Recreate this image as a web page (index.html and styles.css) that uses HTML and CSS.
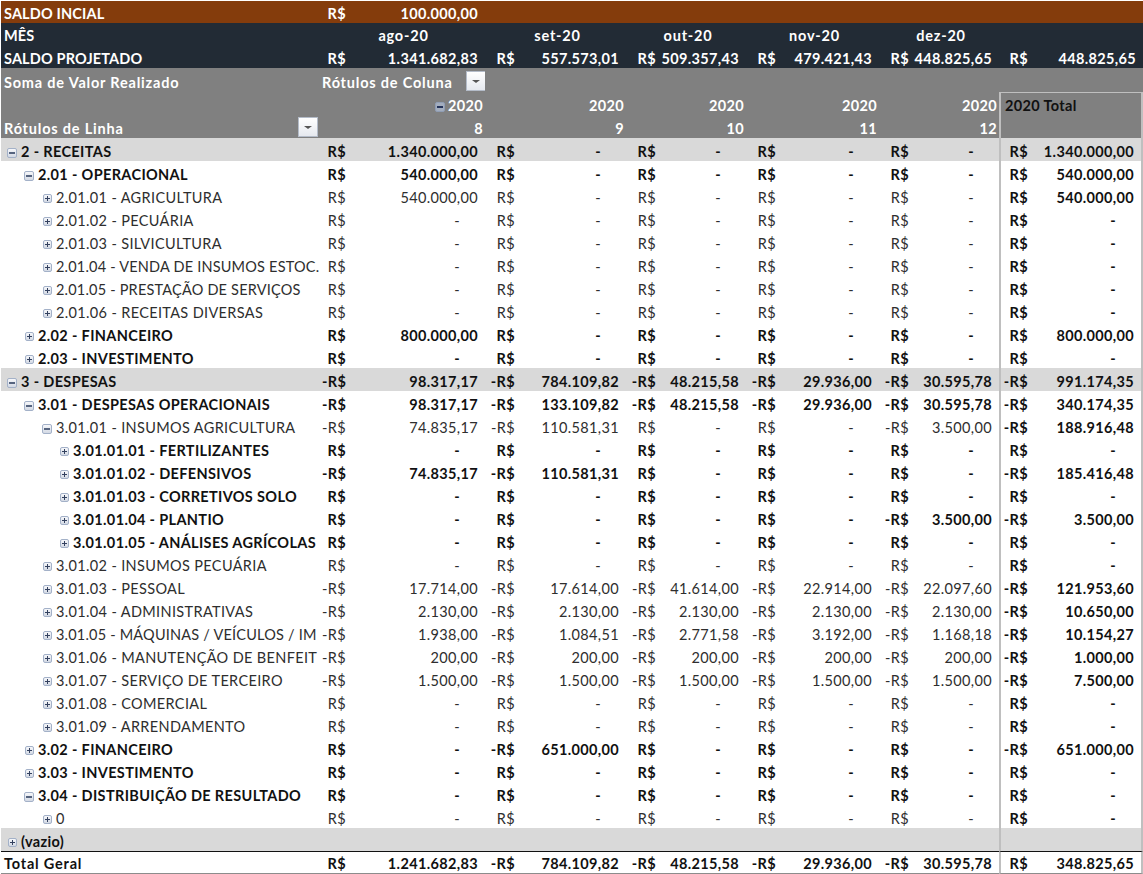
FILE: index.html
```html
<!DOCTYPE html>
<html lang="pt-BR">
<head>
<meta charset="utf-8">
<title>Tabela dinâmica</title>
<link rel="stylesheet" href="styles.css">
</head>
<body>
<table class="pivot">
<colgroup>
<col class="c-label"><col class="c1"><col class="v1"><col class="c2"><col class="v2"><col class="c3"><col class="v3"><col class="c4"><col class="v4"><col class="c5"><col class="v5"><col class="c6"><col class="v6">
</colgroup>
<tbody>
<tr class="brown"><td class="side">SALDO INCIAL</td><td class="cur">R$</td><td class="val">100.000,00</td><td colspan="10"></td></tr>
<tr class="navy month"><td class="side">MÊS</td><td colspan="2" class="mid first">ago-20</td><td colspan="2" class="mid">set-20</td><td colspan="2" class="mid">out-20</td><td colspan="2" class="mid">nov-20</td><td colspan="2" class="mid">dez-20</td><td colspan="2"></td></tr>
<tr class="navy proj"><td class="side">SALDO PROJETADO</td><td class="cur">R$</td><td class="val">1.341.682,83</td><td class="cur">R$</td><td class="val">557.573,01</td><td class="cur">R$</td><td class="val">509.357,43</td><td class="cur">R$</td><td class="val">479.421,43</td><td class="cur">R$</td><td class="val">448.825,65</td><td class="cur">R$</td><td class="val">448.825,65</td></tr>
<tr class="head h24"><td class="side wide">Soma de Valor Realizado</td><td colspan="2" class="collabel wide">Rótulos de Coluna<span class="drop drop-col"></span></td><td colspan="10"></td></tr>
<tr class="head"><td class="side"></td><td colspan="2" class="year"><span class="tog tog-dark"></span>2020</td><td colspan="2" class="year">2020</td><td colspan="2" class="year">2020</td><td colspan="2" class="year">2020</td><td colspan="2" class="year">2020</td><td colspan="2" class="grand top">2020 Total</td></tr>
<tr class="head"><td class="side rowlabel wide">Rótulos de Linha<span class="drop drop-row"></span></td><td colspan="2" class="year">8</td><td colspan="2" class="year">9</td><td colspan="2" class="year">10</td><td colspan="2" class="year">11</td><td colspan="2" class="year">12</td><td colspan="2" class="grand"></td></tr>
<tr class="band b"><td class="l0"><span class="tog"></span>2 - RECEITAS</td><td class="cur">R$</td><td class="val">1.340.000,00</td><td class="cur">R$</td><td class="val nil">-</td><td class="cur">R$</td><td class="val nil">-</td><td class="cur">R$</td><td class="val nil">-</td><td class="cur">R$</td><td class="val nil">-</td><td class="cur tc">R$</td><td class="val tv">1.340.000,00</td></tr>
<tr class="b"><td class="l1"><span class="tog"></span>2.01 - OPERACIONAL</td><td class="cur">R$</td><td class="val">540.000,00</td><td class="cur">R$</td><td class="val nil">-</td><td class="cur">R$</td><td class="val nil">-</td><td class="cur">R$</td><td class="val nil">-</td><td class="cur">R$</td><td class="val nil">-</td><td class="cur tc">R$</td><td class="val tv">540.000,00</td></tr>
<tr><td class="l2"><span class="tog plus"></span>2.01.01 - AGRICULTURA</td><td class="cur">R$</td><td class="val">540.000,00</td><td class="cur">R$</td><td class="val nil">-</td><td class="cur">R$</td><td class="val nil">-</td><td class="cur">R$</td><td class="val nil">-</td><td class="cur">R$</td><td class="val nil">-</td><td class="cur tc">R$</td><td class="val tv">540.000,00</td></tr>
<tr><td class="l2"><span class="tog plus"></span>2.01.02 - PECUÁRIA</td><td class="cur">R$</td><td class="val nil">-</td><td class="cur">R$</td><td class="val nil">-</td><td class="cur">R$</td><td class="val nil">-</td><td class="cur">R$</td><td class="val nil">-</td><td class="cur">R$</td><td class="val nil">-</td><td class="cur tc">R$</td><td class="val tv nil">-</td></tr>
<tr><td class="l2"><span class="tog plus"></span>2.01.03 - SILVICULTURA</td><td class="cur">R$</td><td class="val nil">-</td><td class="cur">R$</td><td class="val nil">-</td><td class="cur">R$</td><td class="val nil">-</td><td class="cur">R$</td><td class="val nil">-</td><td class="cur">R$</td><td class="val nil">-</td><td class="cur tc">R$</td><td class="val tv nil">-</td></tr>
<tr><td class="l2 tight"><span class="tog plus"></span>2.01.04 - VENDA DE INSUMOS ESTOC.</td><td class="cur">R$</td><td class="val nil">-</td><td class="cur">R$</td><td class="val nil">-</td><td class="cur">R$</td><td class="val nil">-</td><td class="cur">R$</td><td class="val nil">-</td><td class="cur">R$</td><td class="val nil">-</td><td class="cur tc">R$</td><td class="val tv nil">-</td></tr>
<tr><td class="l2 tight"><span class="tog plus"></span>2.01.05 - PRESTAÇÃO DE SERVIÇOS</td><td class="cur">R$</td><td class="val nil">-</td><td class="cur">R$</td><td class="val nil">-</td><td class="cur">R$</td><td class="val nil">-</td><td class="cur">R$</td><td class="val nil">-</td><td class="cur">R$</td><td class="val nil">-</td><td class="cur tc">R$</td><td class="val tv nil">-</td></tr>
<tr><td class="l2"><span class="tog plus"></span>2.01.06 - RECEITAS DIVERSAS</td><td class="cur">R$</td><td class="val nil">-</td><td class="cur">R$</td><td class="val nil">-</td><td class="cur">R$</td><td class="val nil">-</td><td class="cur">R$</td><td class="val nil">-</td><td class="cur">R$</td><td class="val nil">-</td><td class="cur tc">R$</td><td class="val tv nil">-</td></tr>
<tr class="b"><td class="l1"><span class="tog plus"></span>2.02 - FINANCEIRO</td><td class="cur">R$</td><td class="val">800.000,00</td><td class="cur">R$</td><td class="val nil">-</td><td class="cur">R$</td><td class="val nil">-</td><td class="cur">R$</td><td class="val nil">-</td><td class="cur">R$</td><td class="val nil">-</td><td class="cur tc">R$</td><td class="val tv">800.000,00</td></tr>
<tr class="b"><td class="l1"><span class="tog plus"></span>2.03 - INVESTIMENTO</td><td class="cur">R$</td><td class="val nil">-</td><td class="cur">R$</td><td class="val nil">-</td><td class="cur">R$</td><td class="val nil">-</td><td class="cur">R$</td><td class="val nil">-</td><td class="cur">R$</td><td class="val nil">-</td><td class="cur tc">R$</td><td class="val tv nil">-</td></tr>
<tr class="band b"><td class="l0"><span class="tog"></span>3 - DESPESAS</td><td class="cur">-R$</td><td class="val">98.317,17</td><td class="cur">-R$</td><td class="val">784.109,82</td><td class="cur">-R$</td><td class="val">48.215,58</td><td class="cur">-R$</td><td class="val">29.936,00</td><td class="cur">-R$</td><td class="val">30.595,78</td><td class="cur tc">-R$</td><td class="val tv">991.174,35</td></tr>
<tr class="b"><td class="l1"><span class="tog"></span>3.01 - DESPESAS OPERACIONAIS</td><td class="cur">-R$</td><td class="val">98.317,17</td><td class="cur">-R$</td><td class="val">133.109,82</td><td class="cur">-R$</td><td class="val">48.215,58</td><td class="cur">-R$</td><td class="val">29.936,00</td><td class="cur">-R$</td><td class="val">30.595,78</td><td class="cur tc">-R$</td><td class="val tv">340.174,35</td></tr>
<tr><td class="l2"><span class="tog"></span>3.01.01 - INSUMOS AGRICULTURA</td><td class="cur">-R$</td><td class="val">74.835,17</td><td class="cur">-R$</td><td class="val">110.581,31</td><td class="cur">R$</td><td class="val nil">-</td><td class="cur">R$</td><td class="val nil">-</td><td class="cur">-R$</td><td class="val">3.500,00</td><td class="cur tc">-R$</td><td class="val tv">188.916,48</td></tr>
<tr class="b"><td class="l3"><span class="tog plus"></span>3.01.01.01 - FERTILIZANTES</td><td class="cur">R$</td><td class="val nil">-</td><td class="cur">R$</td><td class="val nil">-</td><td class="cur">R$</td><td class="val nil">-</td><td class="cur">R$</td><td class="val nil">-</td><td class="cur">R$</td><td class="val nil">-</td><td class="cur tc">R$</td><td class="val tv nil">-</td></tr>
<tr class="b"><td class="l3"><span class="tog plus"></span>3.01.01.02 - DEFENSIVOS</td><td class="cur">-R$</td><td class="val">74.835,17</td><td class="cur">-R$</td><td class="val">110.581,31</td><td class="cur">R$</td><td class="val nil">-</td><td class="cur">R$</td><td class="val nil">-</td><td class="cur">R$</td><td class="val nil">-</td><td class="cur tc">-R$</td><td class="val tv">185.416,48</td></tr>
<tr class="b"><td class="l3"><span class="tog plus"></span>3.01.01.03 - CORRETIVOS SOLO</td><td class="cur">R$</td><td class="val nil">-</td><td class="cur">R$</td><td class="val nil">-</td><td class="cur">R$</td><td class="val nil">-</td><td class="cur">R$</td><td class="val nil">-</td><td class="cur">R$</td><td class="val nil">-</td><td class="cur tc">R$</td><td class="val tv nil">-</td></tr>
<tr class="b"><td class="l3"><span class="tog plus"></span>3.01.01.04 - PLANTIO</td><td class="cur">R$</td><td class="val nil">-</td><td class="cur">R$</td><td class="val nil">-</td><td class="cur">R$</td><td class="val nil">-</td><td class="cur">R$</td><td class="val nil">-</td><td class="cur">-R$</td><td class="val">3.500,00</td><td class="cur tc">-R$</td><td class="val tv">3.500,00</td></tr>
<tr class="b"><td class="l3"><span class="tog plus"></span>3.01.01.05 - ANÁLISES AGRÍCOLAS</td><td class="cur">R$</td><td class="val nil">-</td><td class="cur">R$</td><td class="val nil">-</td><td class="cur">R$</td><td class="val nil">-</td><td class="cur">R$</td><td class="val nil">-</td><td class="cur">R$</td><td class="val nil">-</td><td class="cur tc">R$</td><td class="val tv nil">-</td></tr>
<tr><td class="l2"><span class="tog plus"></span>3.01.02 - INSUMOS PECUÁRIA</td><td class="cur">R$</td><td class="val nil">-</td><td class="cur">R$</td><td class="val nil">-</td><td class="cur">R$</td><td class="val nil">-</td><td class="cur">R$</td><td class="val nil">-</td><td class="cur">R$</td><td class="val nil">-</td><td class="cur tc">R$</td><td class="val tv nil">-</td></tr>
<tr><td class="l2"><span class="tog plus"></span>3.01.03 - PESSOAL</td><td class="cur">-R$</td><td class="val">17.714,00</td><td class="cur">-R$</td><td class="val">17.614,00</td><td class="cur">-R$</td><td class="val">41.614,00</td><td class="cur">-R$</td><td class="val">22.914,00</td><td class="cur">-R$</td><td class="val">22.097,60</td><td class="cur tc">-R$</td><td class="val tv">121.953,60</td></tr>
<tr><td class="l2"><span class="tog plus"></span>3.01.04 - ADMINISTRATIVAS</td><td class="cur">-R$</td><td class="val">2.130,00</td><td class="cur">-R$</td><td class="val">2.130,00</td><td class="cur">-R$</td><td class="val">2.130,00</td><td class="cur">-R$</td><td class="val">2.130,00</td><td class="cur">-R$</td><td class="val">2.130,00</td><td class="cur tc">-R$</td><td class="val tv">10.650,00</td></tr>
<tr><td class="l2 tight"><span class="tog plus"></span>3.01.05 - MÁQUINAS / VEÍCULOS / IM</td><td class="cur">-R$</td><td class="val">1.938,00</td><td class="cur">-R$</td><td class="val">1.084,51</td><td class="cur">-R$</td><td class="val">2.771,58</td><td class="cur">-R$</td><td class="val">3.192,00</td><td class="cur">-R$</td><td class="val">1.168,18</td><td class="cur tc">-R$</td><td class="val tv">10.154,27</td></tr>
<tr><td class="l2"><span class="tog plus"></span>3.01.06 - MANUTENÇÃO DE BENFEIT</td><td class="cur">-R$</td><td class="val">200,00</td><td class="cur">-R$</td><td class="val">200,00</td><td class="cur">-R$</td><td class="val">200,00</td><td class="cur">-R$</td><td class="val">200,00</td><td class="cur">-R$</td><td class="val">200,00</td><td class="cur tc">-R$</td><td class="val tv">1.000,00</td></tr>
<tr><td class="l2"><span class="tog plus"></span>3.01.07 - SERVIÇO DE TERCEIRO</td><td class="cur">-R$</td><td class="val">1.500,00</td><td class="cur">-R$</td><td class="val">1.500,00</td><td class="cur">-R$</td><td class="val">1.500,00</td><td class="cur">-R$</td><td class="val">1.500,00</td><td class="cur">-R$</td><td class="val">1.500,00</td><td class="cur tc">-R$</td><td class="val tv">7.500,00</td></tr>
<tr><td class="l2"><span class="tog plus"></span>3.01.08 - COMERCIAL</td><td class="cur">R$</td><td class="val nil">-</td><td class="cur">R$</td><td class="val nil">-</td><td class="cur">R$</td><td class="val nil">-</td><td class="cur">R$</td><td class="val nil">-</td><td class="cur">R$</td><td class="val nil">-</td><td class="cur tc">R$</td><td class="val tv nil">-</td></tr>
<tr><td class="l2"><span class="tog plus"></span>3.01.09 - ARRENDAMENTO</td><td class="cur">R$</td><td class="val nil">-</td><td class="cur">R$</td><td class="val nil">-</td><td class="cur">R$</td><td class="val nil">-</td><td class="cur">R$</td><td class="val nil">-</td><td class="cur">R$</td><td class="val nil">-</td><td class="cur tc">R$</td><td class="val tv nil">-</td></tr>
<tr class="b"><td class="l1"><span class="tog plus"></span>3.02 - FINANCEIRO</td><td class="cur">R$</td><td class="val nil">-</td><td class="cur">-R$</td><td class="val">651.000,00</td><td class="cur">R$</td><td class="val nil">-</td><td class="cur">R$</td><td class="val nil">-</td><td class="cur">R$</td><td class="val nil">-</td><td class="cur tc">-R$</td><td class="val tv">651.000,00</td></tr>
<tr class="b"><td class="l1"><span class="tog plus"></span>3.03 - INVESTIMENTO</td><td class="cur">R$</td><td class="val nil">-</td><td class="cur">R$</td><td class="val nil">-</td><td class="cur">R$</td><td class="val nil">-</td><td class="cur">R$</td><td class="val nil">-</td><td class="cur">R$</td><td class="val nil">-</td><td class="cur tc">R$</td><td class="val tv nil">-</td></tr>
<tr class="b"><td class="l1"><span class="tog"></span>3.04 - DISTRIBUIÇÃO DE RESULTADO</td><td class="cur">R$</td><td class="val nil">-</td><td class="cur">R$</td><td class="val nil">-</td><td class="cur">R$</td><td class="val nil">-</td><td class="cur">R$</td><td class="val nil">-</td><td class="cur">R$</td><td class="val nil">-</td><td class="cur tc">R$</td><td class="val tv nil">-</td></tr>
<tr><td class="l2"><span class="tog plus"></span>0</td><td class="cur">R$</td><td class="val nil">-</td><td class="cur">R$</td><td class="val nil">-</td><td class="cur">R$</td><td class="val nil">-</td><td class="cur">R$</td><td class="val nil">-</td><td class="cur">R$</td><td class="val nil">-</td><td class="cur tc">R$</td><td class="val tv nil">-</td></tr>
<tr class="band b"><td class="l0"><span class="tog plus"></span>(vazio)</td><td class="cur"></td><td class="val"></td><td class="cur"></td><td class="val"></td><td class="cur"></td><td class="val"></td><td class="cur"></td><td class="val"></td><td class="cur"></td><td class="val"></td><td class="cur tc"></td><td class="val tv"></td></tr>
<tr class="b total"><td class="side wide">Total Geral</td><td class="cur">R$</td><td class="val">1.241.682,83</td><td class="cur">-R$</td><td class="val">784.109,82</td><td class="cur">-R$</td><td class="val">48.215,58</td><td class="cur">-R$</td><td class="val">29.936,00</td><td class="cur">-R$</td><td class="val">30.595,78</td><td class="cur tc">R$</td><td class="val tv">348.825,65</td></tr>
</tbody>
</table>
</body>
</html>
```
FILE: styles.css
```css
html, body {
  margin: 0;
  padding: 0;
  background: #fff;
}
body {
  box-sizing: border-box;
  padding: 1px 0 0 1px;
  height: 874px;
  overflow: hidden;
}
.pivot {
  table-layout: fixed;
  width: 1142px;
  border-collapse: separate;
  border-spacing: 0;
  font-family: "Lato", "Liberation Sans", sans-serif;
  font-size: 14.5px;
  letter-spacing: 0.35px;
  color: #2e2e2e;
}
.c-label { width: 321px; }
.c1 { width: 24px; }
.v1 { width: 139px; }
.c2 { width: 30px; }
.v2 { width: 111px; }
.c3 { width: 30px; }
.v3 { width: 90px; }
.c4 { width: 30px; }
.v4 { width: 103px; }
.c5 { width: 30px; }
.v5 { width: 90px; }
.c6 { width: 29px; }
.v6 { width: 115px; }
.pivot td {
  height: 23px;
  padding: 4px 0 0;
  white-space: nowrap;
  overflow: hidden;
  box-sizing: border-box;
  vertical-align: top;
  line-height: 19px;
}
.pivot .side { padding-left: 3px; }
.pivot .cur { text-align: right; }
.pivot .val { text-align: right; padding-right: 7px; }
.pivot .nil { padding-right: 25px; }
.pivot .mid { text-align: center; padding-left: 4px; letter-spacing: 0.8px; }
.pivot .mid.first { padding-left: 0; }
.brown td { background: #843c0c; color: #fff; font-weight: 700; }
.pivot .brown td { height: 22px; line-height: 18px; }
.navy td { background: #222b35; color: #fff; font-weight: 700; }
.pivot .month td { padding-top: 2px; line-height: 21px; }
.pivot .proj td { height: 22px; line-height: 18px; }
.navy .side, .brown .side { letter-spacing: 0.15px; }
.head td { background: #808080; color: #fff; font-weight: 700; }
.pivot .head.h24 td { height: 24px; padding-top: 5px; line-height: 19px; }
.pivot .wide { letter-spacing: 0.8px; }
.pivot .tight { letter-spacing: 0.2px; }
.pivot .year { text-align: right; padding-right: 2px; }
.pivot .collabel { position: relative; }
.pivot .rowlabel { position: relative; }
.pivot .grand {
  color: #111;
  padding-left: 4px;
  border-left: 2px solid #bfbfbf;
  border-right: 2px solid #bfbfbf;
}
.pivot .grand.top {
  padding-top: 3px;
  border-top: 1px solid #bfbfbf;
}
.band td { background: #d9d9d9; }
.b td { font-weight: 700; color: #111; }
.pivot .tc {
  font-weight: 700;
  color: #111;
  border-left: 2px solid #bfbfbf;
}
.pivot .tv {
  font-weight: 700;
  color: #111;
  border-right: 2px solid #bfbfbf;
}
.pivot .total td {
  height: 23px;
  padding-top: 3px;
  line-height: 18px;
  border-top: 1px solid #111;
  border-bottom: 1px solid #8c8c8c;
}
.pivot .l0 { padding-left: 6px; }
.pivot .l1 { padding-left: 23px; }
.pivot .l2 { padding-left: 41px; }
.pivot .l3 { padding-left: 58px; }
.tog {
  display: inline-block;
  position: relative;
  width: 10px;
  height: 10px;
  margin-right: 4px;
  box-sizing: border-box;
  border: 1px solid #a3b1c8;
  border-radius: 2px;
  background: linear-gradient(#f6f7fa, #d3d9e4);
  vertical-align: -1px;
}
.tog::before {
  content: "";
  position: absolute;
  left: 1px;
  right: 1px;
  top: 3px;
  height: 2px;
  background: #56647f;
}
.tog.plus {
  width: 9px;
  height: 9px;
  margin-left: 1px;
  vertical-align: 0;
}
.tog.plus::before {
  top: 3px;
  height: 1px;
  background: #33415f;
}
.tog.plus::after {
  content: "";
  position: absolute;
  top: 1px;
  bottom: 1px;
  left: 3px;
  width: 1px;
  background: #33415f;
}
.tog-dark {
  background: #a3adbe;
  border-color: #8f9db4;
  margin-right: 3px;
}
.tog-dark::before { background: #24335a; }
.drop {
  position: absolute;
  top: 3px;
  width: 20px;
  height: 20px;
  box-sizing: border-box;
  border: 1px solid #b4bcc9;
  background: linear-gradient(#ffffff, #e6e9ef);
}
.drop::after {
  content: "";
  position: absolute;
  left: 5px;
  top: 8px;
  border: 4px solid transparent;
  border-top: 3px solid #555;
  border-bottom: 0;
}
.drop-col { left: 144px; }
.drop-row { left: 297px; top: 2px; }
```
